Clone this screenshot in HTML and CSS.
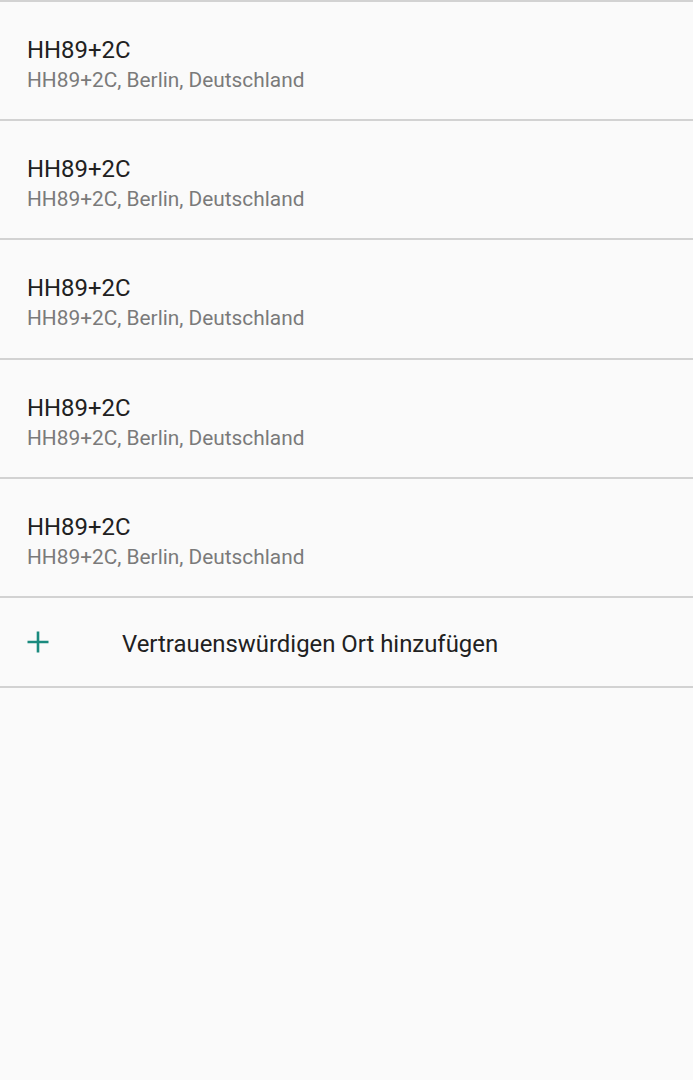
FILE: index.html
```html
<!DOCTYPE html>
<html lang="de">
<head>
<meta charset="utf-8">
<link rel="stylesheet" href="styles.css">
</head>
<body>
<div class="list">
  <div class="item"><div class="title">HH89+2C</div><div class="sub">HH89+2C, Berlin, Deutschland</div></div>
  <div class="item"><div class="title">HH89+2C</div><div class="sub">HH89+2C, Berlin, Deutschland</div></div>
  <div class="item"><div class="title">HH89+2C</div><div class="sub">HH89+2C, Berlin, Deutschland</div></div>
  <div class="item"><div class="title">HH89+2C</div><div class="sub">HH89+2C, Berlin, Deutschland</div></div>
  <div class="item"><div class="title">HH89+2C</div><div class="sub">HH89+2C, Berlin, Deutschland</div></div>
  <div class="add">
    <svg class="plus" width="24" height="24" viewBox="0 0 24 24"><path d="M12 1.5V22.5M1.5 12H22.5" stroke="#1a8a7e" stroke-width="2.6" fill="none"/></svg>
    <span class="add-label">Vertrauenswürdigen Ort hinzufügen</span>
  </div>
</div>
</body>
</html>
```
FILE: styles.css
```css
html, body {
  margin: 0;
  padding: 0;
  background: #fafafa;
}
body {
  font-family: Roboto, "Noto Sans", sans-serif;
  width: 693px;
  height: 1080px;
  overflow: hidden;
}
.list {
  border-top: 2px solid #d2d2d2;
}
.item {
  box-sizing: border-box;
  height: 119.2px;
  border-bottom: 2px solid #d2d2d2;
  padding: 33px 0 0 27px;
}
.title {
  font-size: 23.9px;
  line-height: 30px;
  color: #212121;
}
.sub {
  font-size: 20.85px;
  line-height: 28px;
  color: #7a7a7a;
  margin-top: 1px;
}
.add {
  box-sizing: border-box;
  height: 90px;
  border-bottom: 2px solid #d2d2d2;
  display: flex;
  align-items: center;
  padding-left: 26px;
}
.plus {
  flex: none;
}
.add-label {
  margin-left: 72px;
  font-size: 23.9px;
  color: #212121;
  padding-top: 4px;
}
```
